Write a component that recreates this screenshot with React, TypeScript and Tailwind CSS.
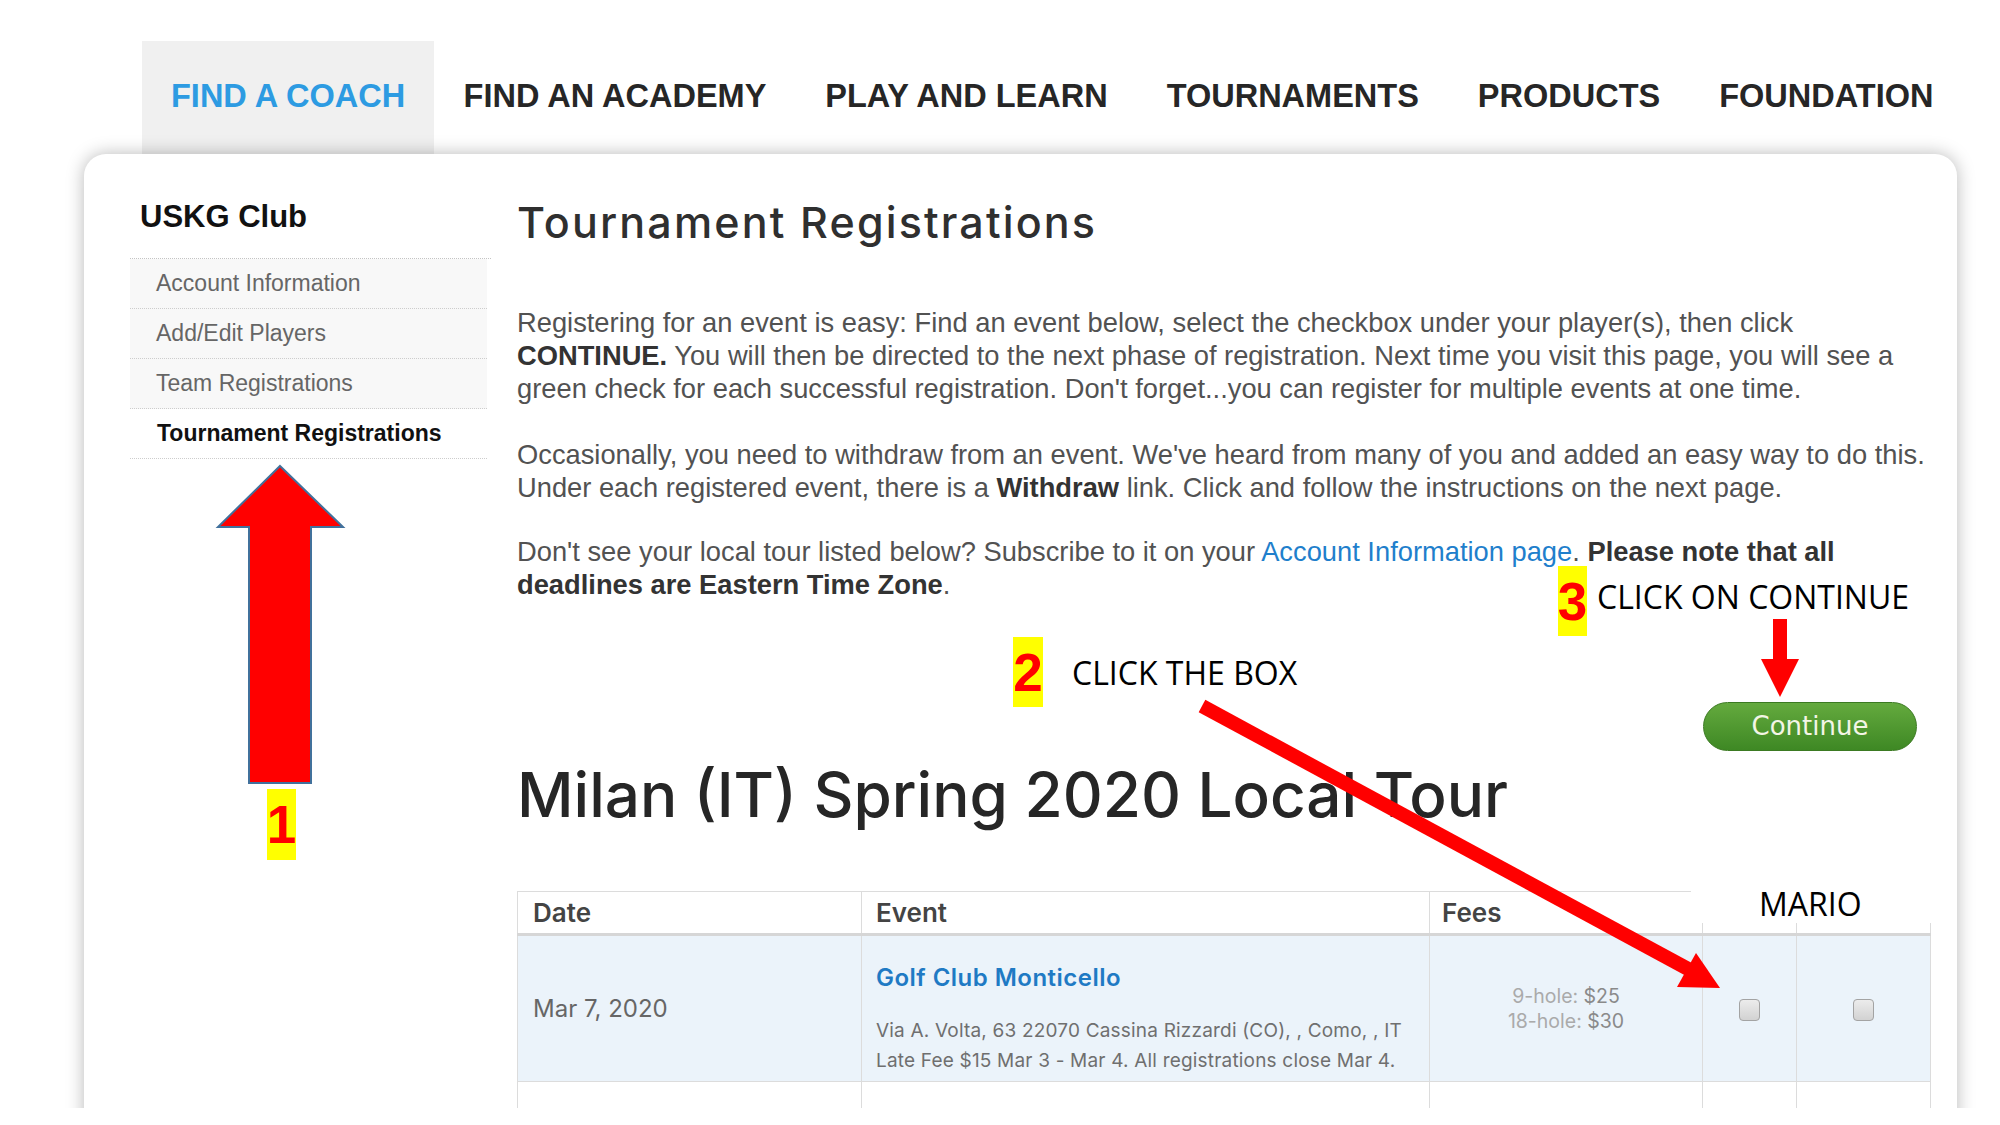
const navItems = ['FIND A COACH', 'FIND AN ACADEMY', 'PLAY AND LEARN', 'TOURNAMENTS', 'PRODUCTS', 'FOUNDATION'];
const sideItems = ['Account Information', 'Add/Edit Players', 'Team Registrations'];

const Checkbox = () => (
  <span className="inline-block h-[22px] w-[21px] rounded-[4px] border border-[#a3a3a3] bg-[linear-gradient(to_bottom,#ececec,#d2d2d2)] align-middle" />
);

const Annotations = () => (
  <>
    <svg className="pointer-events-none absolute left-0 top-0 z-20" width="2000" height="1108" viewBox="0 0 2000 1108">
      <polygon points="280,466 343,527 311,527 311,783 249,783 249,527 218,527" fill="#ff0000" stroke="#41719c" strokeWidth="2" />
      <rect x="1773" y="619" width="14" height="42" fill="#ff0000" />
      <polygon points="1761,659 1799,659 1780,697" fill="#ff0000" />
      <line x1="1202" y1="706" x2="1690" y2="970" stroke="#ff0000" strokeWidth="14" />
      <polygon points="1696,953 1720,988 1677,987" fill="#ff0000" />
    </svg>

    <div className="absolute left-[267px] top-[789px] z-20 flex h-[71px] w-[29px] items-center justify-center bg-[#ffff00] font-['Liberation_Sans',Arial,sans-serif] text-[53px] font-bold leading-none text-[#ff0000]">1</div>
    <div className="absolute left-[1013px] top-[637px] z-20 flex h-[70px] w-[30px] items-center justify-center bg-[#ffff00] font-['Liberation_Sans',Arial,sans-serif] text-[53px] font-bold leading-none text-[#ff0000]">2</div>
    <div className="absolute left-[1558px] top-[566px] z-20 flex h-[70px] w-[29px] items-center justify-center bg-[#ffff00] font-['Liberation_Sans',Arial,sans-serif] text-[53px] font-bold leading-none text-[#ff0000]">3</div>

    <div className="absolute left-[1072px] top-[657px] z-20 whitespace-nowrap font-['Open_Sans',sans-serif] text-[32px] leading-[31px] text-black">CLICK THE BOX</div>
    <div className="absolute left-[1597px] top-[581px] z-20 whitespace-nowrap font-['Open_Sans',sans-serif] text-[32px] leading-[31px] text-black">CLICK ON CONTINUE</div>
    <div className="absolute left-[1691px] top-[878px] z-20 h-[45px] w-[250px] bg-white pl-[68px] pt-[10px] font-['Open_Sans',sans-serif] text-[32px] leading-[31px] text-black">MARIO</div>
  </>
);

export default function App() {
  return (
    <div className="relative h-[1108px] w-[2000px] overflow-hidden bg-white">
      <nav className="mt-[41px] flex h-[113px] pl-[142px] font-['Liberation_Sans',Arial,sans-serif] text-[32.5px] font-bold">
        {navItems.map((item, i) => (
          <div
            key={item}
            className={
              i === 0
                ? 'flex items-center bg-[#f0f0f0] px-[29px] pb-[3px] text-[#2d9be2]'
                : 'flex items-center px-[29.5px] pb-[3px] text-[#262626]'
            }
          >
            {item}
          </div>
        ))}
      </nav>

      <div className="relative z-10 ml-[84px] flex h-[1000px] w-[1873px] rounded-t-[22px] bg-white pl-[46px] pr-[26px] pt-[44px] shadow-[0_0_18px_rgba(0,0,0,0.28)]">
        <aside className="w-[361px] shrink-0 font-['Liberation_Sans',Arial,sans-serif]">
          <h2 className="ml-[10px] mt-[4px] text-[31px] font-bold leading-[30px] text-[#111]">USKG Club</h2>
          <ul className="mt-[26px] border-t border-dotted border-[#c4c4c4]">
            {sideItems.map((s) => (
              <li key={s} className="flex h-[50px] w-[357px] items-center border-b border-dotted border-[#cdcdcd] bg-[#f8f8f8] pl-[26px] text-[23px] text-[#666]">
                {s}
              </li>
            ))}
            <li className="flex h-[50px] w-[357px] items-center border-b border-dotted border-[#cdcdcd] pl-[27px] text-[23px] font-bold text-[#111]">
              Tournament Registrations
            </li>
          </ul>
        </aside>

        <main className="ml-[26px] w-[1414px] shrink-0">
          <h1 className="font-['Inter',sans-serif] text-[43px] font-medium leading-[48px] tracking-[0.05em] text-[#2f2f2f]">
            Tournament Registrations
          </h1>

          <div className="mt-[60px] whitespace-nowrap font-['Liberation_Sans',Arial,sans-serif] text-[27.3px] leading-[33px] text-[#525252]">
            <p>
              Registering for an event is easy: Find an event below, select the checkbox under your player(s), then click
              <br />
              <b className="text-[#333]">CONTINUE.</b> You will then be directed to the next phase of registration. Next time you visit this page, you will see a
              <br />
              green check for each successful registration. Don't forget...you can register for multiple events at one time.
            </p>
            <p className="mt-[33px]">
              Occasionally, you need to withdraw from an event. We've heard from many of you and added an easy way to do this.
              <br />
              Under each registered event, there is a <b className="text-[#333]">Withdraw</b> link. Click and follow the instructions on the next page.
            </p>
            <p className="mt-[31px]">
              Don't see your local tour listed below? Subscribe to it on your <a className="text-[#1f7fcc]">Account Information page</a>.{' '}
              <b className="text-[#333]">Please note that all</b>
              <br />
              <b className="text-[#333]">deadlines are Eastern Time Zone</b>.
            </p>
          </div>

          <div className="mt-[101px] flex justify-end pr-[14px]">
            <button className="h-[49px] w-[214px] rounded-full border border-[#3b7a22] bg-[linear-gradient(to_bottom,#64aa3e,#3e8824)] font-['DejaVu_Sans',sans-serif] text-[26px] text-[#f3f5e6]">
              Continue
            </button>
          </div>

          <h2 className="mt-[7px] font-['Inter',sans-serif] text-[62px] font-medium leading-[74px] text-[#262626]">
            Milan (IT) Spring 2020 Local Tour
          </h2>

          <table className="mt-[59px] w-[1413px] table-fixed border-collapse font-['Inter',sans-serif]">
            <thead>
              <tr className="h-[43px] border-b-[3px] border-[#d6d6d6] text-left text-[26px] font-semibold text-[#444]">
                <th className="w-[344px] border border-[#dcdcdc] pl-[15px] font-semibold">Date</th>
                <th className="w-[568px] border border-[#dcdcdc] pl-[14px] font-semibold">Event</th>
                <th className="w-[273px] border border-[#dcdcdc] pl-[12px] font-semibold">Fees</th>
                <th className="w-[94px] border border-[#dcdcdc]" />
                <th className="w-[134px] border border-[#dcdcdc]" />
              </tr>
            </thead>
            <tbody>
              <tr className="h-[147px] bg-[#ebf3fa]">
                <td className="border border-[#dcdcdc] pl-[15px] align-middle text-[24px] text-[#666]">Mar 7, 2020</td>
                <td className="border border-[#dcdcdc] pl-[14px] pt-[27px] align-top">
                  <div className="text-[24px] font-semibold leading-[30px] tracking-[0.02em] text-[#1f7ac4]">Golf Club Monticello</div>
                  <div className="mt-[23px] whitespace-nowrap text-[19px] leading-[30px] tracking-[0.01em] text-[#6f6f6f]">
                    Via A. Volta, 63 22070 Cassina Rizzardi (CO), , Como, , IT
                    <br />
                    Late Fee $15 Mar 3 - Mar 4. All registrations close Mar 4.
                  </div>
                </td>
                <td className="border border-[#dcdcdc] text-center align-middle text-[19.5px] leading-[25px] text-[#aaa]">
                  9-hole: <span className="text-[#8a8a8a]">$25</span>
                  <br />
                  18-hole: <span className="text-[#8a8a8a]">$30</span>
                </td>
                <td className="border border-[#dcdcdc] text-center align-middle">
                  <Checkbox />
                </td>
                <td className="border border-[#dcdcdc] text-center align-middle">
                  <Checkbox />
                </td>
              </tr>
              <tr className="h-[60px] bg-white">
                <td className="border border-[#dcdcdc]" />
                <td className="border border-[#dcdcdc]" />
                <td className="border border-[#dcdcdc]" />
                <td className="border border-[#dcdcdc]" />
                <td className="border border-[#dcdcdc]" />
              </tr>
            </tbody>
          </table>
        </main>
      </div>

      <Annotations />
    </div>
  );
}
